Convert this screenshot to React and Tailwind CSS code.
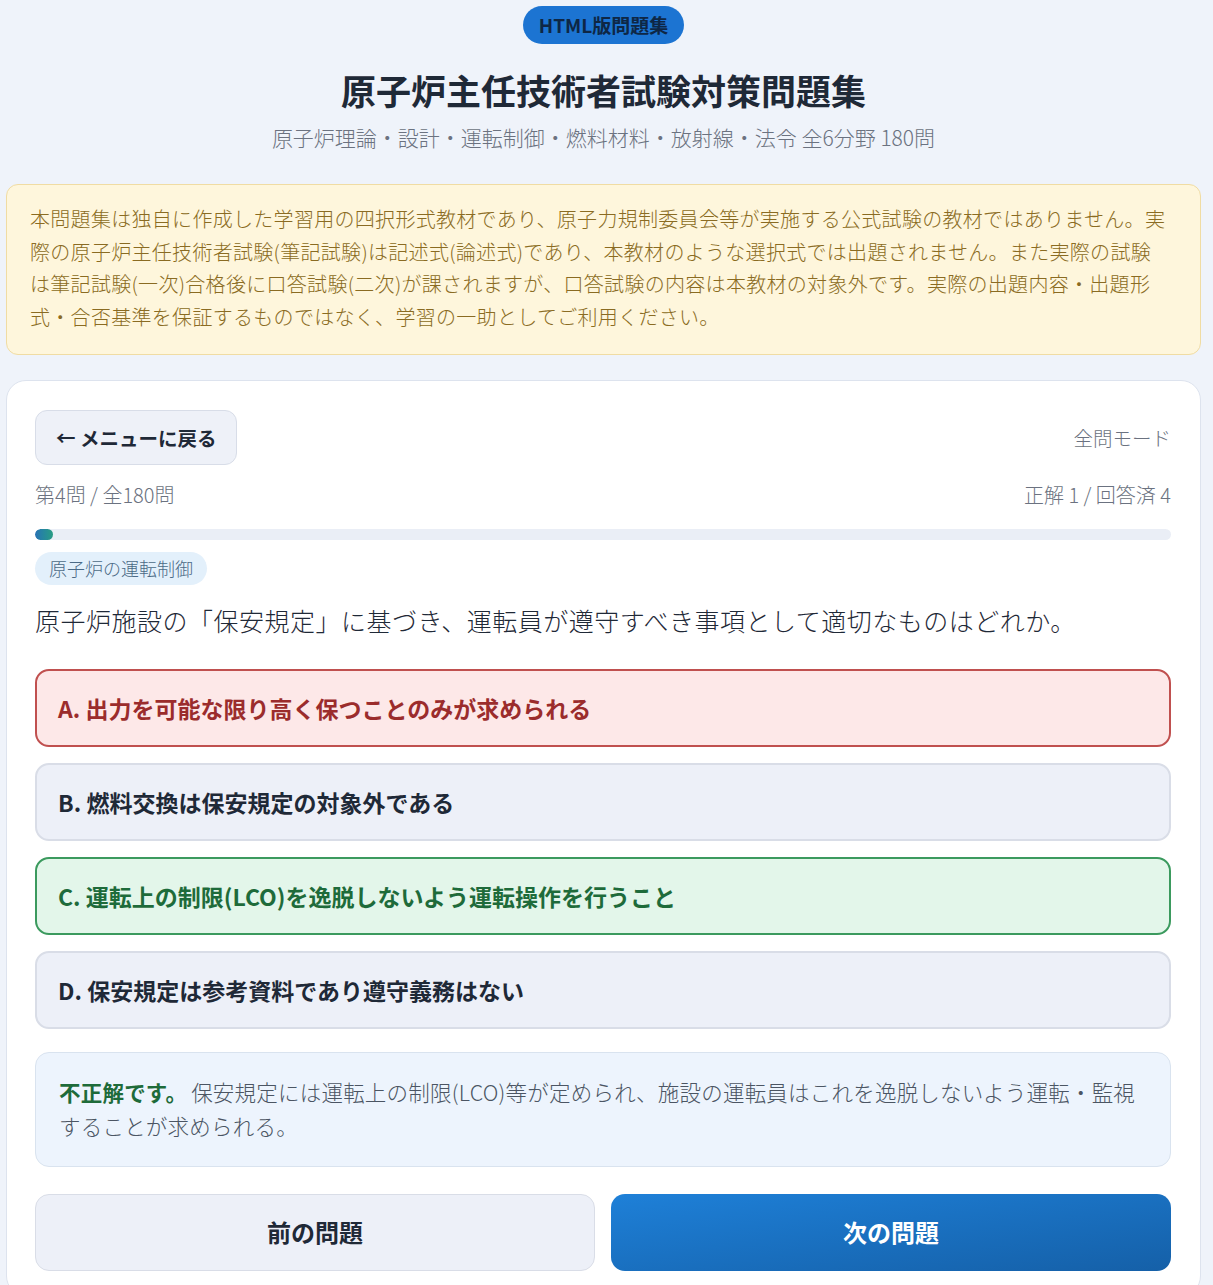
import React from 'react';

const font = { fontFamily: '"Noto Sans CJK JP", "Noto Sans", sans-serif' };

const options = [
  { key: 'A', text: '出力を可能な限り高く保つことのみが求められる', state: 'wrong' },
  { key: 'B', text: '燃料交換は保安規定の対象外である', state: 'none' },
  { key: 'C', text: '運転上の制限(LCO)を逸脱しないよう運転操作を行うこと', state: 'correct' },
  { key: 'D', text: '保安規定は参考資料であり遵守義務はない', state: 'none' },
];

const optionClass = {
  wrong: 'bg-[#fde8e8] border-[#c0504f] text-[#9b2c2c]',
  correct: 'bg-[#e3f6ea] border-[#3b9a5e] text-[#1e6b3a]',
  none: 'bg-[#edf0f8] border-[#d9dde7] text-[#1f2937]',
};

export default function App() {
  return (
    <div className="min-h-screen bg-[#eff3fa] pl-[6px] pr-[12px] pt-[6px] pb-6" style={font}>
      <div className="flex flex-col items-center">
        <span className="rounded-full bg-[#1c74d2] px-[16px] h-[38px] flex items-center text-[19px] font-bold text-[#0e2745]">
          HTML版問題集
        </span>
        <h1 className="mt-[24px] text-[35px] leading-[44px] font-bold text-[#1f2937]">原子炉主任技術者試験対策問題集</h1>
        <p className="mt-[10px] text-[21px] leading-[30px] font-light text-[#6b7280]">
          原子炉理論・設計・運転制御・燃料材料・放射線・法令 全6分野 180問
        </p>
      </div>

      <div className="mt-[32px] rounded-xl border border-[#f0dca3] bg-[#fef6dc] pl-[23px] pr-[18px] pt-[18px] pb-[20px] text-[20px] leading-[32.7px] font-light text-[#8a6b22] tracking-[0.015em]">
        本問題集は独自に作成した学習用の四択形式教材であり、原子力規制委員会等が実施する公式試験の教材ではありません。実
        <br />
        際の原子炉主任技術者試験(筆記試験)は記述式(論述式)であり、本教材のような選択式では出題されません。また実際の試験
        <br />
        は筆記試験(一次)合格後に口答試験(二次)が課されますが、口答試験の内容は本教材の対象外です。実際の出題内容・出題形
        <br />
        式・合否基準を保証するものではなく、学習の一助としてご利用ください。
      </div>

      <div className="mt-[25px] rounded-[20px] border border-[#dde3ee] bg-white pl-[28px] pr-[29px] pt-[29px] pb-6">
        <div className="flex items-center justify-between">
          <button className="h-[55px] px-[20px] rounded-xl border border-[#d8dde8] bg-[#eef1f8] text-[19.5px] font-bold text-[#1f2937]">
            ← メニューに戻る
          </button>
          <span className="text-[19.5px] font-light text-[#6b7280]">全問モード</span>
        </div>

        <div className="mt-[16px] flex items-center justify-between text-[20px] leading-[28px] font-light text-[#6b7280]">
          <span>第4問 / 全180問</span>
          <span>正解 1 / 回答済 4</span>
        </div>

        <div className="mt-[20px] h-[11px] rounded-full bg-[#eaeef6] overflow-hidden">
          <div className="h-full rounded-full bg-gradient-to-r from-[#2a72b4] to-[#2a9c82]" style={{ width: '18px' }} />
        </div>

        <span className="mt-[12px] inline-flex h-[33px] items-center rounded-full bg-[#e3f0fb] px-[14px] text-[18px] font-light text-[#4b6a86]">
          原子炉の運転制御
        </span>

        <p className="mt-[17px] text-[25px] leading-[36px] font-light text-[#1f2937] tracking-[0.02em]">
          原子炉施設の「保安規定」に基づき、運転員が遵守すべき事項として適切なものはどれか。
        </p>

        <div className="mt-[31px] flex flex-col gap-[16px]">
          {options.map((o) => (
            <div
              key={o.key}
              className={`h-[78px] flex items-center rounded-[14px] border-2 px-[21px] text-[23px] font-bold ${optionClass[o.state]}`}
            >
              {o.key}. {o.text}
            </div>
          ))}
        </div>

        <div className="mt-[23px] rounded-[14px] border border-[#d9e3ef] bg-[#edf4fd] px-[23px] pt-[22px] pb-[23px] text-[21.5px] leading-[34px] font-light text-[#4b5563] tracking-[0.01em]">
          <strong className="font-bold text-[#1e6b3a]">不正解です。</strong>
          <span className="ml-[4px]">保安規定には運転上の制限(LCO)等が定められ、施設の運転員はこれを逸脱しないよう運転・監視</span>
          <br />
          することが求められる。
        </div>

        <div className="mt-[27px] grid grid-cols-2 gap-4">
          <button className="h-[77px] rounded-[14px] border border-[#d9dde7] bg-[#edf0f8] text-[24px] font-bold text-[#1f2937]">
            前の問題
          </button>
          <button className="h-[77px] rounded-[14px] bg-gradient-to-br from-[#1e80d8] to-[#1560a8] text-[24px] font-bold text-white">
            次の問題
          </button>
        </div>
      </div>
    </div>
  );
}
